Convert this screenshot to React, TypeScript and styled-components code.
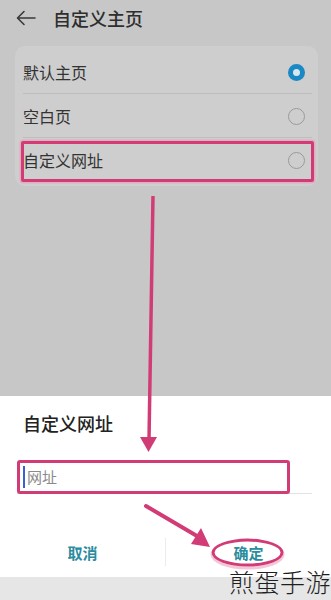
import React from "react";
import styled, { createGlobalStyle } from "styled-components";

const PINK = "#d23c76";

const Global = createGlobalStyle`
  html, body { margin: 0; padding: 0; }
  body {
    width: 331px;
    height: 600px;
    overflow: hidden;
    font-family: "Noto Sans CJK SC", "Noto Sans", sans-serif;
  }
`;

const Page = styled.div`
  position: relative;
  width: 331px;
  height: 600px;
  display: flex;
  flex-direction: column;
  background: #c7c7c7;
`;

const Backdrop = styled.div`
  height: 396px;
  display: flex;
  flex-direction: column;
  background: #c7c7c7;
  padding: 0 13px 0 15px;
  box-sizing: border-box;
`;

const Header = styled.div`
  height: 36px;
  display: flex;
  align-items: center;
  gap: 17px;
  padding-left: 1px;
  margin-bottom: 10px;
`;

const BackIcon = styled.svg`
  width: 20px;
  height: 16px;
  flex: none;
`;

const Title = styled.div`
  font-size: 18px;
  color: #2e2e2e;
  line-height: 1;
  font-weight: 500;
`;

const Card = styled.div`
  background: #cecece;
  border-radius: 10px;
  padding: 4px 0;
  display: flex;
  flex-direction: column;
`;

const Row = styled.div<{ $last?: boolean }>`
  position: relative;
  height: 44px;
  display: flex;
  align-items: center;
  justify-content: space-between;
  padding: 0 13px 0 8px;
  margin-left: 0;
  font-size: 16px;
  color: #333;
  box-sizing: border-box;
  &::before {
    content: "";
    position: absolute;
    left: 8px;
    right: 6px;
    bottom: 0;
    height: 1px;
    background: ${(p) => (p.$last ? "transparent" : "#bdbdbd")};
  }
`;

const Highlight = styled.div`
  position: absolute;
  left: 6px;
  right: 4px;
  top: 3px;
  bottom: 0;
  border: 3px solid ${PINK};
  border-radius: 2px;
  box-shadow: 0 0 0 1.5px rgba(240, 150, 185, 0.6);
  pointer-events: none;
`;

const Radio = styled.span<{ $on?: boolean }>`
  width: 17px;
  height: 17px;
  border-radius: 50%;
  box-sizing: border-box;
  border: ${(p) => (p.$on ? "5px solid #1a88c4" : "1.5px solid #9a9a9a")};
  background: ${(p) => (p.$on ? "#d8e6ee" : "transparent")};
  flex: none;
`;

const Dialog = styled.div`
  height: 181px;
  background: #ffffff;
  display: flex;
  flex-direction: column;
  padding: 14px 19px 0 17px;
  box-sizing: border-box;
`;

const DialogTitle = styled.div`
  font-size: 18px;
  font-weight: 500;
  color: #222;
  line-height: 26px;
  padding-left: 6px;
  margin-bottom: 24px;
`;

const InputField = styled.div`
  position: relative;
  height: 33px;
  display: flex;
  align-items: center;
  gap: 2px;
  padding-left: 6px;
  border-bottom: 1px solid #e2e2e2;
`;

const InputBox = styled.div`
  position: absolute;
  left: 0;
  top: 0;
  bottom: -1px;
  width: 273px;
  border: 3px solid ${PINK};
  border-radius: 3px;
  box-sizing: border-box;
  pointer-events: none;
`;

const Caret = styled.span`
  width: 2px;
  height: 22px;
  background: #3a5fd0;
`;

const Placeholder = styled.span`
  font-size: 15px;
  color: #8a8a8a;
`;

const Buttons = styled.div`
  margin-top: 43px;
  display: flex;
  align-items: center;
  height: 30px;
  margin-left: -17px;
  margin-right: -19px;
`;

const ActionButton = styled.div`
  flex: 1;
  text-align: center;
  font-size: 15px;
  font-weight: 700;
  color: #2b8c9e;
  position: relative;
`;

const Divider = styled.span`
  width: 1px;
  height: 28px;
  background: #ececec;
`;

const Ring = styled.span`
  position: absolute;
  left: 50%;
  top: 50%;
  width: 72px;
  height: 28px;
  transform: translate(-52%, -48%);
  border: 3px solid ${PINK};
  border-radius: 50%;
  box-shadow: 0 2px 0 1px rgba(236, 160, 190, 0.6);
  box-sizing: border-box;
`;

const BottomBar = styled.div`
  flex: 1;
  background: #e6e6e6;
`;

const Watermark = styled.div`
  position: absolute;
  right: 0;
  bottom: 4px;
  font-size: 25px;
  font-weight: 300;
  color: #1e1e1e;
  letter-spacing: 0.5px;
  line-height: 30px;
`;

const Arrows = styled.svg`
  position: absolute;
  left: 0;
  top: 0;
  width: 331px;
  height: 600px;
  pointer-events: none;
`;

export default function App() {
  return (
    <>
      <Global />
      <Page>
        <Backdrop>
          <Header>
            <BackIcon viewBox="0 0 20 16">
              <path
                d="M19 8 H2 M8 1.5 L1.5 8 L8 14.5"
                fill="none"
                stroke="#3a3a3a"
                strokeWidth="1.6"
                strokeLinecap="round"
                strokeLinejoin="round"
              />
            </BackIcon>
            <Title>自定义主页</Title>
          </Header>
          <Card>
            <Row>
              默认主页
              <Radio $on />
            </Row>
            <Row>
              空白页
              <Radio />
            </Row>
            <Row $last>
              自定义网址
              <Radio />
              <Highlight />
            </Row>
          </Card>
        </Backdrop>
        <Dialog>
          <DialogTitle>自定义网址</DialogTitle>
          <InputField>
            <Caret />
            <Placeholder>网址</Placeholder>
            <InputBox />
          </InputField>
          <Buttons>
            <ActionButton>取消</ActionButton>
            <Divider />
            <ActionButton>
              确定
              <Ring />
            </ActionButton>
          </Buttons>
        </Dialog>
        <BottomBar />
        <Arrows viewBox="0 0 331 600">
          <line x1="153" y1="196" x2="149" y2="440" stroke={PINK} strokeWidth="3.5" />
          <polygon points="140,437 157,437 148.5,452" fill={PINK} />
          <line x1="146" y1="506" x2="197" y2="536" stroke={PINK} strokeWidth="4" strokeLinecap="round" />
          <polygon points="191,544 201,528 210,547" fill={PINK} />
        </Arrows>
        <Watermark>煎蛋手游</Watermark>
      </Page>
    </>
  );
}
